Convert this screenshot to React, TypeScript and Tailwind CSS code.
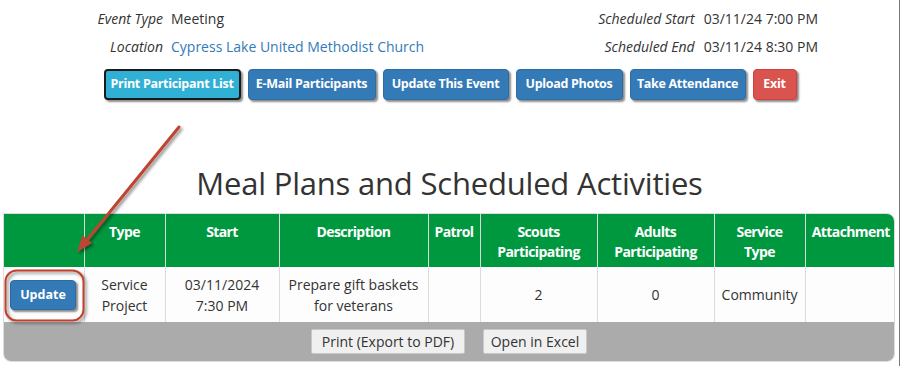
import React from 'react';

const font = { fontFamily: '"Open Sans", "Noto Sans", sans-serif' };

const actions = [
    { label: 'Print Participant List', w: 'w-[137px]', cls: 'bg-[#31b0d5] border-2 border-[#1a1a1a]' },
    { label: 'E-Mail Participants', w: 'w-[128px]', cls: 'bg-[#337ab7] border border-[#2e6da4]' },
    { label: 'Update This Event', w: 'w-[126px]', cls: 'bg-[#337ab7] border border-[#2e6da4]' },
    { label: 'Upload Photos', w: 'w-[107px]', cls: 'bg-[#337ab7] border border-[#2e6da4]' },
    { label: 'Take Attendance', w: 'w-[116px]', cls: 'bg-[#337ab7] border border-[#2e6da4]' },
    { label: 'Exit', w: 'w-[44px]', cls: 'bg-[#d9534f] border border-[#d43f3a]' },
];

const columns: { label: string[]; w: string }[] = [
    { label: [], w: 'w-[80px]' },
    { label: ['Type'], w: 'w-[81px]' },
    { label: ['Start'], w: 'w-[114px]' },
    { label: ['Description'], w: 'w-[149px]' },
    { label: ['Patrol'], w: 'w-[52px]' },
    { label: ['Scouts', 'Participating'], w: 'w-[117px]' },
    { label: ['Adults', 'Participating'], w: 'w-[117px]' },
    { label: ['Service', 'Type'], w: 'w-[91px]' },
    { label: ['Attachment'], w: 'w-[91px]' },
];

export default function App() {
    return (
        <div className="relative w-[900px] h-[366px] bg-white text-[#333] border-r border-[#7a7a7a] overflow-hidden" style={font}>
            {/* event summary */}
            <div className="flex pt-[9px] text-[14px] leading-[20px]">
                <div className="grid grid-cols-[163px_auto] gap-x-[8px] gap-y-[8px]">
                    <span className="italic text-right">Event Type</span>
                    <span>Meeting</span>
                    <span className="italic text-right">Location</span>
                    <span className="text-[#337ab7]">Cypress Lake United Methodist Church</span>
                </div>
                <div className="ml-auto mr-[81px] grid grid-cols-[auto_auto] gap-x-[9px] gap-y-[8px]">
                    <span className="italic text-right">Scheduled Start</span>
                    <span>03/11/24 7:00 PM</span>
                    <span className="italic text-right">Scheduled End</span>
                    <span>03/11/24 8:30 PM</span>
                </div>
            </div>

            <div className="flex justify-center gap-[7px] mt-[12px] pl-[1px]">
                {actions.map((a) => (
                    <button
                        key={a.label}
                        className={`${a.w} ${a.cls} h-[31px] rounded-[4px] text-white text-[12.5px] font-bold tracking-[-0.3px] whitespace-nowrap shadow-[2px_2px_2px_rgba(0,0,0,0.45)]`}
                    >
                        {a.label}
                    </button>
                ))}
            </div>

            <h2 className="text-center text-[31px] leading-[40px] mt-[63px] text-[#333] tracking-[-0.2px]">
                Meal Plans and Scheduled Activities
            </h2>

            <div className="ml-[3px] mt-[10px] w-[892px] rounded-tr-lg rounded-b-lg overflow-hidden border border-[#dcdcdc]">
                <table className="w-full border-collapse table-fixed">
                    <thead>
                        <tr className="bg-[#00983f] text-white h-[53px]">
                            {columns.map((c, i) => (
                                <th
                                    key={i}
                                    className={`${c.w} align-top pt-[8px] px-0 text-[14px] leading-[20px] font-bold tracking-[-0.6px] whitespace-nowrap border-x border-[#d9d9d9] first:border-l-0 last:border-r-0`}
                                >
                                    {c.label.map((l, j) => (
                                        <div key={j}>{l}</div>
                                    ))}
                                </th>
                            ))}
                        </tr>
                    </thead>
                    <tbody>
                        <tr className="bg-[#fdfdfd] h-[55px] text-[14px] leading-[21px] text-center">
                            <td className="border-r border-[#dcdcdc] pl-[6px] text-left">
                                <button className="w-[66px] h-[30px] rounded-[4px] bg-[#337ab7] border border-[#2e6da4] text-white text-[12.5px] font-bold shadow-[2px_2px_2px_rgba(0,0,0,0.45)]">
                                    Update
                                </button>
                            </td>
                            <td className="border-x border-[#dcdcdc]">Service<br />Project</td>
                            <td className="border-x border-[#dcdcdc]">03/11/2024<br />7:30 PM</td>
                            <td className="border-x border-[#dcdcdc]">Prepare gift baskets<br />for veterans</td>
                            <td className="border-x border-[#dcdcdc]"></td>
                            <td className="border-x border-[#dcdcdc]">2</td>
                            <td className="border-x border-[#dcdcdc]">0</td>
                            <td className="border-x border-[#dcdcdc]">Community</td>
                            <td className="border-l border-[#dcdcdc]"></td>
                        </tr>
                    </tbody>
                </table>
                <div className="h-[39px] bg-[#ababab] flex items-center justify-center gap-[18px]">
                    <button className="w-[154px] h-[25px] bg-[#f0f0f0] border border-[#c8c8c8] rounded-[2px] text-[14px] text-[#333]">
                        Print (Export to PDF)
                    </button>
                    <button className="w-[104px] h-[25px] bg-[#f0f0f0] border border-[#c8c8c8] rounded-[2px] text-[14px] text-[#333]">
                        Open in Excel
                    </button>
                </div>
            </div>

            {/* annotation: arrow + highlight ring */}
            <svg className="absolute inset-0 pointer-events-none" width="900" height="366" viewBox="0 0 900 366">
                <defs>
                    <filter id="sh" x="-20%" y="-20%" width="140%" height="140%">
                        <feDropShadow dx="2" dy="2" stdDeviation="1.6" floodColor="#000" floodOpacity="0.45" />
                    </filter>
                </defs>
                <g filter="url(#sh)">
                    <line x1="179" y1="127" x2="87" y2="240" stroke="#bf4430" strokeWidth="3" strokeLinecap="round" />
                    <polygon points="77,252 92,243 82.5,235.5" fill="#bf4430" />
                    <rect x="5.5" y="270.5" width="78" height="50" rx="11" fill="none" stroke="#c0432f" strokeWidth="2" />
                </g>
            </svg>
        </div>
    );
}
